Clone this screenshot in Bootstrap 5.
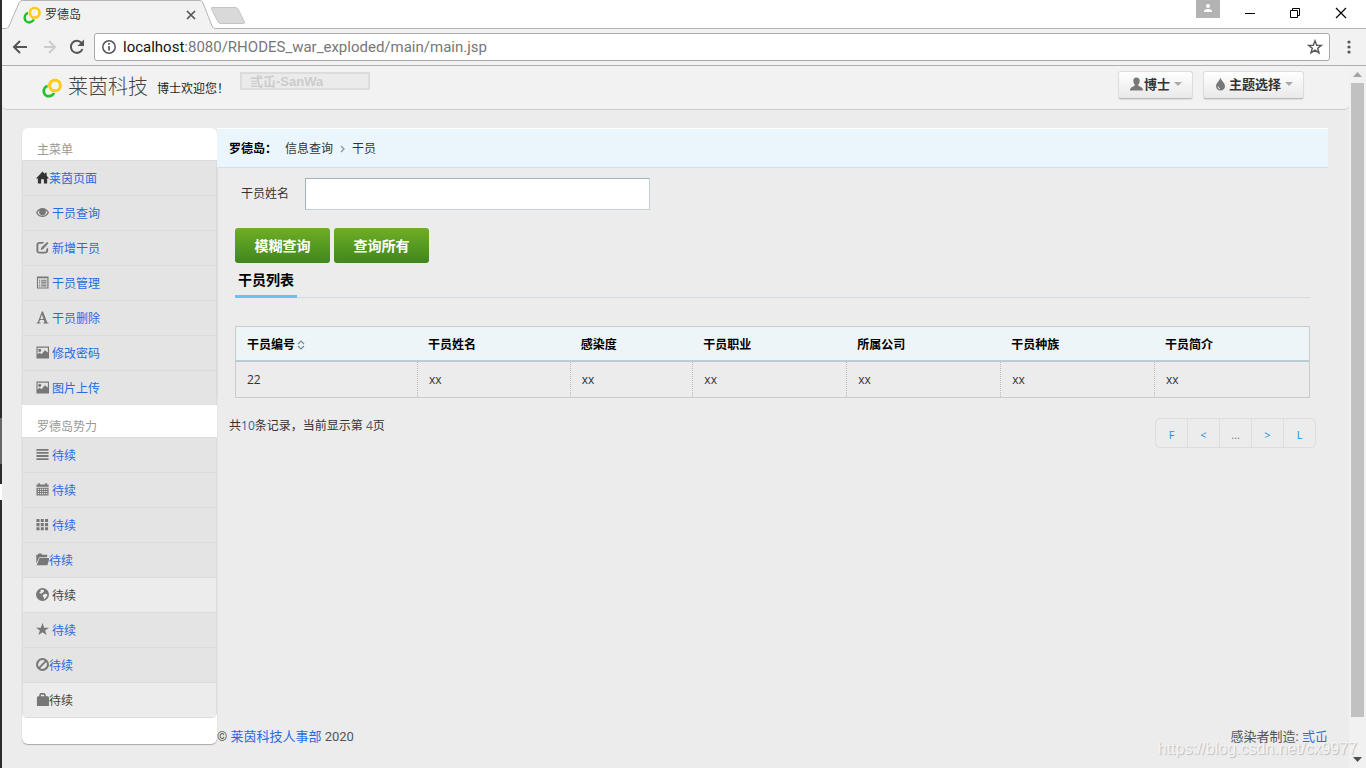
<!DOCTYPE html>
<html lang="zh-CN">
<head>
<meta charset="utf-8">
<meta name="viewport" content="width=device-width, initial-scale=1">
<title>罗德岛</title>
<link href="https://cdn.jsdelivr.net/npm/bootstrap@5.3.0/dist/css/bootstrap.min.css" rel="stylesheet">
<style>
body{font:12px/20px "Open Sans","Noto Sans CJK SC",sans-serif;color:#333;min-height:100vh;padding-left:2px;
 background:linear-gradient(#2d2d2f 0 418px,#666 418px 464px,#2d2d2f 464px 484px,#fff 484px 500px,#2d2d2f 500px) 0 0/2px 100% no-repeat #ececec}
a{color:#2a6ae0;text-decoration:none}
svg{display:block;flex:none}
.plain-btn{border:0;background:none;padding:0;color:#5a5a5a}
/* browser frame */
.tabstrip{height:29px;background:#fff;border-bottom:1px solid #b5b5b5;position:relative}
.tab-shape{position:absolute;left:0;top:0}
.tab-body{width:202px;height:28px;padding:2px 4px 0 21px;position:relative}
.win-user{width:24px;height:18px;background:#b3b3b3}
.toolbar{height:37px;background:#f2f2f2;border-bottom:1px solid #b0b0b0;padding:0 14px 0 10px}
.address{height:28px;background:#fff;border:1px solid #a9a9a9;border-radius:3px;padding:0 6px}
.url-line{font:15px/20px Roboto,"Open Sans",sans-serif;color:#777;margin-left:6px}
.url-line b{font-weight:400;color:#111}
/* scroll bar */
.scroller{width:17px;background:#f1f1f1}
.scroller .thumb{width:13px;background:#c1c1c1;margin-bottom:34px}
/* page header */
.site-head{height:44px;background:#f2f2f2;border-bottom:1px solid #ccc;border-radius:0 0 5px 5px;padding:0 45px 0 39px}
.brand-name{font:300 20px/24px "Noto Sans CJK SC",sans-serif;color:#444;margin:8px 0 0 5px}
.greet{margin:13px 0 0 9px;width:83px;color:#222}
.search-in{width:130px;height:18px;margin-top:6px;padding:0 8px;border:2px solid #dcdcdc;background:#ebebeb;font:bold 13px/14px "Liberation Sans","Noto Sans CJK SC",sans-serif;color:#ccc;border-radius:0}
.search-in::placeholder{color:#ccc;opacity:1}
.head-tools{gap:10px;padding-top:5px}
.head-btn{height:28px;padding:0 10px 2px;background:linear-gradient(#fff,#e9e9e9);border:1px solid #ddd;border-bottom-color:#bbb;border-radius:3px;font:bold 13px/18px "Noto Sans CJK SC",sans-serif;color:#333;box-shadow:0 1px 1px #ddd}
.caret-down{border:4px solid transparent;border-top-color:#aaa;border-bottom:0;margin-left:4px}
/* side menu */
.shell{padding:18px 21px 0 20px}
.side{width:195px;background:#fff;border-radius:6px;box-shadow:0 1px 1px #aaa;padding-bottom:26px;margin-bottom:24px}
.side-title{height:32px;padding:12px 0 0 15px;color:#999;margin:0;font-size:12px;line-height:20px;font-weight:400}
.side ul{border:1px solid #dcdcdc;border-bottom:0}
.side ul:last-child{border-bottom:1px solid #dcdcdc;border-radius:0 0 5px 5px}
.side li a{height:35px;background:#e4e4e4;border-bottom:1px solid #dcdcdc;padding:1px 0 0 13px;gap:3px}
.side li:last-child a{height:34px;border-bottom:0}
.side li.tight a{gap:0}
.side li.pale a{background:#ececec;color:#444}
.side svg{fill:#777;width:13px;height:13px;margin-bottom:3px}
.side svg.dark-ico{fill:#333}
/* content */
.crumbs{height:40px;background:#ebf5fc;border-top:1px solid #fff;border-bottom:1px solid #d3e0e7;padding:1px 0 0 12px}
.crumbs a{color:#333}
.pane{border-left:1px solid #dcdcdc;padding:10px 18px 0 17px}
.name-row{padding-left:6px}
.name-in{width:345px;height:32px;border:1px solid #c6d1d8;border-color:#a4b2ba #c6d1d8 #c6d1d8 #a4b2ba;border-radius:0;padding:0 8px}
.go-row{padding-top:18px}
.go-btn{width:95px;height:35px;border:0;border-radius:3px;background:linear-gradient(#6fae24,#40861f);color:#fff;font-size:14px;font-weight:700}
.list-head{border-bottom:1px solid #d3dbe0;margin-bottom:28px}
.list-head h2{font-size:14px;line-height:20px;font-weight:700;color:#000;margin:0 0 -1px;padding:7px 3px 5px;border-bottom:3px solid #62c5ee}
.staff{border:1px solid #c8cccd;border-collapse:separate;border-spacing:0;table-layout:fixed;width:100%}
.staff th{height:35px;padding:2px 11px 0;background:#eef5f8;border-bottom:2px solid #b9cdd5;color:#000}
.staff th+th{padding-left:10px}
.staff td{height:35px;padding:0 11px;border-right:1px dotted #bbb}
.staff td:last-child{border-right:0}
.staff th:nth-child(1){width:16.9%}.staff th:nth-child(2){width:14.2%}.staff th:nth-child(3){width:11.4%}
.staff th:nth-child(n+4){width:14.3%}
.under{padding:20px 12px 0}
.tally{margin-top:-2px}
.tally span{color:#2a6496}
.pager a,.pager span{width:33px;height:30px;line-height:32px;padding:0;margin-left:-1px;text-align:center;font-size:11px;color:#1c90d8;background:none;border:1px solid #ddd}
.pager span{color:#777}
.pager li:first-child a{border-radius:5px 0 0 5px}.pager li:last-child a{border-radius:0 5px 5px 0}
.foot{font:13px/18px Roboto,"Noto Sans CJK SC",sans-serif;color:#555;margin-bottom:22px}
.stamp{position:absolute;right:9px;bottom:8px;font:16px/22px "Liberation Sans",sans-serif;color:#f4f4f4;text-shadow:1px 1px 1px #bbb}
</style>
</head>
<body class="d-flex flex-column">
<svg class="d-none" aria-hidden="true">
 <symbol id="rings" viewBox="0 0 20 20"><circle cx="7" cy="13" r="5.2" fill="none" stroke="#22c02a" stroke-width="2.8" stroke-dasharray="24 9" transform="rotate(-10 7 13)"/><circle cx="13" cy="7.5" r="5.4" fill="none" stroke="#fff" stroke-width="4.2"/><circle cx="13" cy="7.5" r="5.4" fill="none" stroke="#fdcb20" stroke-width="3.2"/></symbol>
 <symbol id="home" viewBox="0 0 14 14"><path d="M7 .5 0 8h2v5.500h3.500V9h3v4.500H12V8h2L11.500 5.200V2h-1.800v1.200z"/></symbol>
 <symbol id="eye" viewBox="0 0 14 14"><path fill-rule="evenodd" d="M0 7C3 .5 11 .5 14 7 11 13.500 3 13.500 0 7zM1.600 7Q3.500 10.500 7 10.500T12.400 7Q11.500 5.500 10.300 4.700A3.700 3.700 0 1 1 3.700 4.700Q2.500 5.500 1.600 7z"/><circle cx="7" cy="6.300" r="2.400"/></symbol>
 <symbol id="edit" viewBox="0 0 14 14"><path d="M9 1H4C1.800 1 .5 2.300.5 4v6.500C.5 12.300 1.800 13.500 4 13.500h5.500c2 0 3.500-1.200 3.500-3V7l-2 2v1.500c0 .7-.6 1.200-1.500 1.200H4c-.9 0-1.500-.5-1.500-1.300V4.200C2.500 3.400 3 3 4 3h3zM12 1l1.500 1.500L7.500 9 5 9.800 5.800 7z"/></symbol>
 <symbol id="sheet" viewBox="0 0 14 14"><path fill-rule="evenodd" d="M1 .5h12.500v13H1zM2.200 2.500v9.800h10V2.500zM3.200 4h1.300v1.200H3.200zm2.300 0h5.800v1.200H5.500zM3.200 6h1.300v1.200H3.200zm2.300 0h5.800v1.200H5.500zM3.200 8h1.300v1.200H3.200zm2.300 0h5.800v1.200H5.500zm-2.300 2h1.300v1.200H3.200zm2.300 0h5.800v1.200H5.500z"/></symbol>
 <symbol id="serif-a" viewBox="0 0 14 14"><path fill-rule="evenodd" d="M7.500.5l4.300 11c.2.800.7 1 1.700 1.100v.9H7.800v-.9c1.300-.1 1.500-.3 1.200-1.200l-.6-1.700H4.300l-.6 1.600c-.3.900 0 1.200 1.300 1.300v.9H.5v-.9c.9-.1 1.300-.5 1.700-1.400L6.300.5zM6.300 3.800 4.700 8.500h3.300z"/></symbol>
 <symbol id="photo" viewBox="0 0 14 14"><path fill-rule="evenodd" d="M.5.5H14V13.500H.5zm1.200 1.500v7L4 7.200l2 1.600L9.500 4.500l3.300 2.500V2zM4 3a1.700 1.700 0 1 1 0 3.400A1.700 1.700 0 0 1 4 3z"/></symbol>
 <symbol id="lines" viewBox="0 0 14 14"><path d="M.5 1h13v2H.5zm0 3.300h13v2H.5zm0 3.300h13v2H.5zm0 3.400h13v2H.5z"/></symbol>
 <symbol id="cal" viewBox="0 0 14 14"><path fill-rule="evenodd" d="M.5 1.500H2.500V0h1.500v1.500h6V0h1.500v1.500H13.500V4H.5zM.5 5h13v8.500H.5zM2 6.200v1.300h1.300V6.200zm2.300 0v1.300h1.300V6.200zm2.200 0v1.300h1.300V6.200zm2.200 0v1.300H10V6.200zm2.200 0v1.300h1.300V6.200zM2 8.500v1.300h1.300V8.500zm2.300 0v1.300h1.300V8.500zm2.200 0v1.300h1.300V8.500zm2.200 0v1.300H10V8.500zm2.200 0v1.300h1.300V8.500zM2 10.800v1.300h1.300v-1.300zm2.300 0v1.300h1.300v-1.300zm2.200 0v1.300h1.300v-1.300zm2.200 0v1.300H10v-1.300zm2.200 0v1.300h1.300v-1.300z"/></symbol>
 <symbol id="cells" viewBox="0 0 14 14"><path d="M.5 1h3.300v3.300H.5zm4.600 0h3.300v3.300H5.100zm4.600 0H13v3.300H9.700zM.5 5.500h3.300v3.300H.5zm4.600 0h3.300v3.300H5.100zm4.600 0H13v3.300H9.700zM.5 10h3.300v3.300H.5zm4.600 0h3.300v3.300H5.100zm4.600 0H13v3.300H9.700z"/></symbol>
 <symbol id="folder" viewBox="0 0 14 14"><path d="M.3 2h1.500l1-1.500h3l1 1.500H12V4.500H3.500L.3 11zM3.800 5.500H14.500l-2.200 7.800H.8z"/></symbol>
 <symbol id="globe" viewBox="0 0 14 14"><path fill-rule="evenodd" d="M7 0a7 7 0 1 1 0 14A7 7 0 0 1 7 0zM7.200 1.500 4.700 2.500 5 4 3.200 5.500 5.500 6.200 7 5.200 8.500 4V2.500zM8 7l-1 2 1.500 1v2.300l2.300-2L12.500 7.500 10.500 6z"/></symbol>
 <symbol id="star" viewBox="0 0 14 14"><path d="M7 0l1.800 5H14L9.800 8l1.600 5L7 10l-4.400 3 1.600-5L0 5h5.200z"/></symbol>
 <symbol id="ban" viewBox="0 0 14 14"><path fill-rule="evenodd" d="M7 0a7 7 0 1 1 0 14A7 7 0 0 1 7 0zM7 2.200a4.800 4.800 0 0 0-4 7.400L9.600 3A5 5 0 0 0 7 2.200zM4.400 11a4.800 4.800 0 0 0 6.600-6.600z"/></symbol>
 <symbol id="bag" viewBox="0 0 14 14"><path fill-rule="evenodd" d="M3.500 3.500V1.500L5 0h4l1.500 1.500v2H13l1 1V14H1V4.500l1-1zM5.300 3.500h3.400V2H5.300z"/></symbol>
 <symbol id="person" viewBox="0 0 14 14"><path d="M7 .5c2.200 0 3.300 1.300 3.200 3.300-.1 1.700-.6 3-1.400 3.800v1.200c1.500.9 4.700 1.300 4.700 4.700H.5c0-3.400 3.200-3.800 4.700-4.700V7.600C4.400 6.800 3.900 5.500 3.800 3.800 3.700 1.800 4.800.5 7 .5z"/></symbol>
</svg>

<header>
 <div class="tabstrip d-flex justify-content-between">
  <svg class="tab-shape" width="250" height="29"><path d="M0 28.500H4.500Q6 28.500 7 26L17 3Q18.500.5 20 .5H198Q200 .5 201 3L210 26Q211 28.500 213 28.500" fill="#f2f2f2" stroke="#b5b5b5"/><path d="M5 29h207" stroke="#f2f2f2" stroke-width="2"/><path d="M210 7.500H233Q235 7.500 236 9L242.500 22Q243 23.500 241 23.500H219Q217 23.500 216 22L209.500 9Q209 7.500 210 7.500z" fill="#d9d9d9" stroke="#c4c4c4"/></svg>
  <div class="tab-body d-flex align-items-center">
   <svg width="18" height="18"><use href="#rings"/></svg><span class="ms-1 me-auto">罗德岛</span>
   <button class="plain-btn" aria-label="关闭标签"><svg width="18" height="18"><path d="M5 5l8 8M13 5l-8 8" stroke="#555" stroke-width="1.7"/></svg></button>
  </div>
  <div class="d-flex">
   <div class="win-user d-flex justify-content-center"><svg width="12" height="14" fill="#fff"><circle cx="6" cy="6" r="2"/><path d="M2 12V10.500Q3 9 6 9t4 1.500V12z"/></svg></div>
   <button class="plain-btn ms-3" aria-label="最小化"><svg width="28" height="28"><path d="M9 13.500h10" stroke="#000"/></svg></button>
   <button class="plain-btn ms-3" aria-label="还原"><svg width="30" height="28"><path d="M10.500 10.500h7v7h-7zM12.500 10V8.500h7v7H18" fill="none" stroke="#000"/></svg></button>
   <button class="plain-btn ms-3 me-2" aria-label="关闭"><svg width="32" height="28"><path d="M10 8l10 10M20 8L10 18" stroke="#000" stroke-width="1.2"/></svg></button>
  </div>
 </div>
 <div class="toolbar d-flex align-items-center">
  <button class="plain-btn" aria-label="后退"><svg width="16" height="16"><path d="M15 8H2M8 2L2 8l6 6" fill="none" stroke="#555" stroke-width="2"/></svg></button>
  <button class="plain-btn ms-3" aria-label="前进"><svg width="13" height="16"><path d="M-1 8h12.500M5 2l6 6-6 6" fill="none" stroke="#ccc" stroke-width="2"/></svg></button>
  <button class="plain-btn ms-2 me-2" aria-label="刷新"><svg class="ms-1" width="17" height="18"><path d="M13.500 11A6 6 0 1 1 12.500 5" fill="none" stroke="#555" stroke-width="2"/><path d="M15 1.500V8H8.500z" fill="#555"/></svg></button>
  <div class="address d-flex align-items-center flex-fill">
   <svg width="16" height="16"><circle cx="8" cy="8" r="6.2" fill="none" stroke="#555" stroke-width="1.5"/><path d="M8 7v4.500M8 4v1.800" stroke="#555" stroke-width="1.7"/></svg>
   <span class="url-line me-auto"><b>localhost</b>:8080/RHODES_war_exploded/main/main.jsp</span>
   <button class="plain-btn" aria-label="收藏"><svg width="16" height="16"><path d="M8 1.800l1.700 4.400 4.700.2-3.700 2.900 1.300 4.500L8 11.200l-4 2.600 1.300-4.500L1.600 6.400l4.700-.2z" fill="none" stroke="#555" stroke-width="1.4"/></svg></button>
  </div>
  <button class="plain-btn ms-3" aria-label="菜单"><svg width="6" height="16" fill="#555"><circle cx="3" cy="3" r="1.6"/><circle cx="3" cy="8" r="1.6"/><circle cx="3" cy="13" r="1.6"/></svg></button>
 </div>
</header>

<div class="d-flex flex-fill position-relative">
 <div class="flex-fill d-flex flex-column">
  <div class="site-head d-flex align-items-start">
   <svg class="mt-2 pt-1" width="22" height="24"><use href="#rings"/></svg>
   <span class="brand-name">莱茵科技</span>
   <span class="greet text-nowrap">博士欢迎您！</span>
   <input class="search-in" type="text" aria-label="搜索" placeholder="弎屲-SanWa">
   <div class="head-tools ms-auto d-flex">
    <button class="head-btn d-flex align-items-center"><svg width="15" height="14" fill="#777"><use href="#person"/></svg>博士<span class="caret-down"></span></button>
    <button class="head-btn d-flex align-items-center"><svg width="15" height="14"><path d="M6.500.5C7.500 4 11 6 11 9.300c0 2.500-2 4.200-4.500 4.200S2 11.800 2 9.300C2 6 5.500 4 6.500.5z" fill="#777"/><path d="M4 9.500q0 2 2 2.500" fill="none" stroke="#eee"/></svg>主题选择<span class="caret-down"></span></button>
   </div>
  </div>

  <div class="shell d-flex flex-fill align-items-start">
   <nav class="side flex-shrink-0">
    <h2 class="side-title">主菜单</h2>
    <ul class="list-unstyled m-0">
     <li class="tight"><a class="d-flex align-items-center" href="#"><svg class="dark-ico"><use href="#home"/></svg>莱茵页面</a></li>
     <li><a class="d-flex align-items-center" href="#"><svg><use href="#eye"/></svg>干员查询</a></li>
     <li><a class="d-flex align-items-center" href="#"><svg><use href="#edit"/></svg>新增干员</a></li>
     <li><a class="d-flex align-items-center" href="#"><svg><use href="#sheet"/></svg>干员管理</a></li>
     <li><a class="d-flex align-items-center" href="#"><svg><use href="#serif-a"/></svg>干员删除</a></li>
     <li><a class="d-flex align-items-center" href="#"><svg><use href="#photo"/></svg>修改密码</a></li>
     <li><a class="d-flex align-items-center" href="#"><svg><use href="#photo"/></svg>图片上传</a></li>
    </ul>
    <h2 class="side-title">罗德岛势力</h2>
    <ul class="list-unstyled m-0">
     <li><a class="d-flex align-items-center" href="#"><svg><use href="#lines"/></svg>待续</a></li>
     <li><a class="d-flex align-items-center" href="#"><svg><use href="#cal"/></svg>待续</a></li>
     <li><a class="d-flex align-items-center" href="#"><svg><use href="#cells"/></svg>待续</a></li>
     <li class="tight"><a class="d-flex align-items-center" href="#"><svg><use href="#folder"/></svg>待续</a></li>
     <li class="pale"><a class="d-flex align-items-center" href="#"><svg><use href="#globe"/></svg>待续</a></li>
     <li><a class="d-flex align-items-center" href="#"><svg><use href="#star"/></svg>待续</a></li>
     <li class="tight"><a class="d-flex align-items-center" href="#"><svg><use href="#ban"/></svg>待续</a></li>
     <li class="tight pale"><a class="d-flex align-items-center" href="#"><svg><use href="#bag"/></svg>待续</a></li>
    </ul>
   </nav>
   <div class="flex-fill d-flex flex-column align-self-stretch">
    <main class="flex-fill">
     <div class="crumbs d-flex align-items-center"><b class="text-black me-2">罗德岛：</b><a href="#">信息查询</a><svg class="mx-1" width="11" height="12"><path d="M4 3l3 3-3 3" fill="none" stroke="#7f98a5" stroke-width="1.3"/></svg><a href="#">干员</a></div>
     <div class="pane">
      <form>
       <div class="name-row d-flex align-items-center"><label for="who" class="me-3">干员姓名</label><input class="name-in" id="who" type="text"></div>
       <div class="go-row d-flex gap-1"><button class="go-btn" type="button">模糊查询</button><button class="go-btn" type="button">查询所有</button></div>
      </form>
      <div class="list-head d-flex"><h2>干员列表</h2></div>
      <table class="staff">
       <thead><tr><th><span class="d-flex align-items-center">干员编号<svg width="12" height="12"><path d="M3 5l3-3 3 3M3 7l3 3 3-3" fill="none" stroke="#6d8c9b" stroke-width="1.2"/></svg></span></th><th>干员姓名</th><th>感染度</th><th>干员职业</th><th>所属公司</th><th>干员种族</th><th>干员简介</th></tr></thead>
       <tbody><tr><td>22</td><td>xx</td><td>xx</td><td>xx</td><td>xx</td><td>xx</td><td>xx</td></tr></tbody>
      </table>
     </div>
     <div class="under d-flex justify-content-between align-items-start">
      <div class="tally">共<span>10</span>条记录，当前显示第 <span>4</span>页</div>
      <ul class="pagination pager mb-0"><li><a class="page-link" href="#">F</a></li><li><a class="page-link" href="#">&lt;</a></li><li><span class="page-link">...</span></li><li><a class="page-link" href="#">&gt;</a></li><li><a class="page-link" href="#">L</a></li></ul>
     </div>
    </main>
    <footer class="foot d-flex justify-content-between"><span>© <a href="#">莱茵科技人事部</a> 2020</span><span>感染者制造: <a href="#">弎屲</a></span></footer>
   </div>
  </div>
 </div>
 <div class="scroller d-flex flex-column align-items-center flex-shrink-0">
  <svg width="9" height="17"><path d="M0 11l4.500-5L9 11z" fill="#a3a3a3"/></svg>
  <div class="thumb flex-fill"></div>
  <svg width="9" height="17"><path d="M0 6l4.500 5L9 6z" fill="#505050"/></svg>
 </div>
 <div class="stamp">https://blog.csdn.net/cx9977</div>
</div>
<script src="https://cdn.jsdelivr.net/npm/bootstrap@5.3.0/dist/js/bootstrap.bundle.min.js"></script>
</body>
</html>
